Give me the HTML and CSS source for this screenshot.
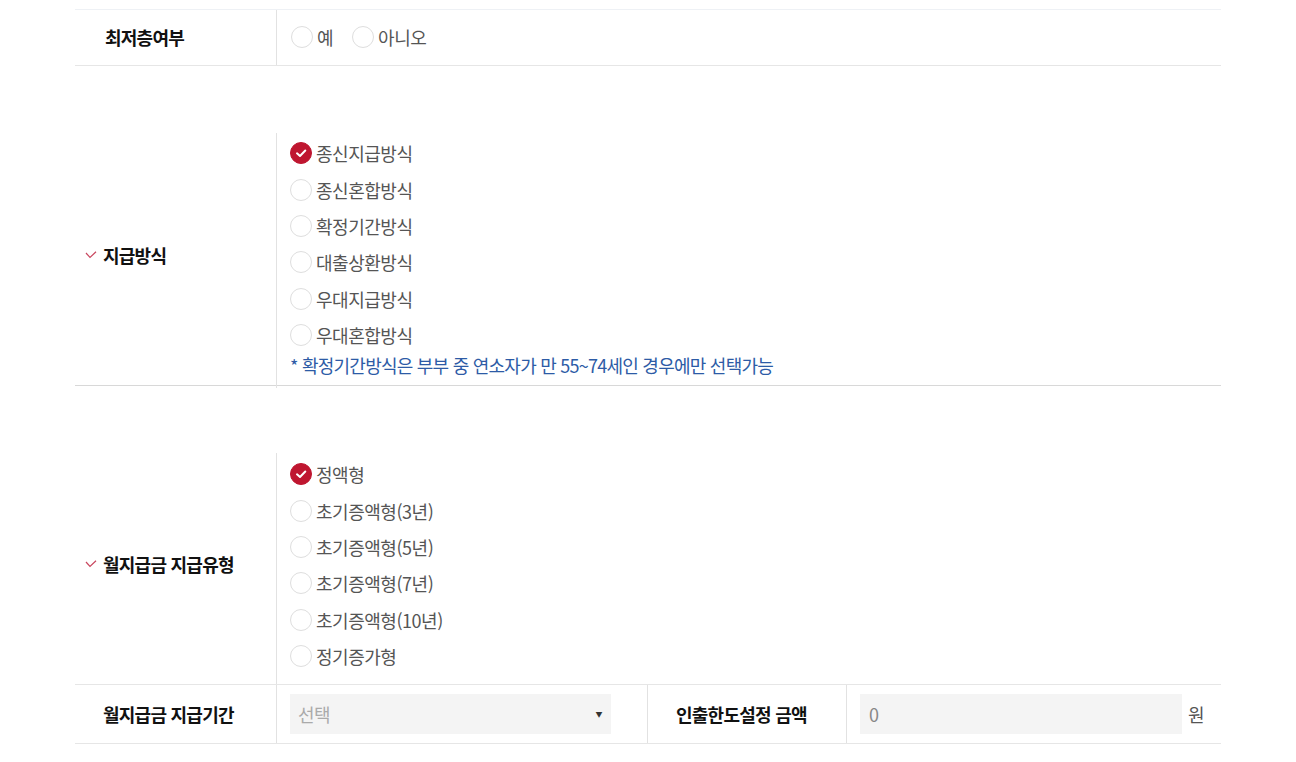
FILE: index.html
```html
<!DOCTYPE html>
<html lang="ko">
<head>
<meta charset="utf-8">
<title>지급방식</title>
<link rel="stylesheet" href="styles.css">
</head>
<body>
<div class="form">
  <div class="row row-first">
    <div class="label">최저층여부</div>
    <div class="cell cell-inline">
      <label class="radio"><span class="dot"></span><span class="txt">예</span></label>
      <label class="radio"><span class="dot"></span><span class="txt">아니오</span></label>
    </div>
  </div>

  <div class="row row-tall row-method">
    <div class="label label-req"><svg class="req" viewBox="0 0 12 8" width="12" height="8"><polyline points="1,2 5,6.5 11,0.8" fill="none" stroke="#c9465e" stroke-width="1.2"/></svg>지급방식</div>
    <div class="cell cell-list">
      <label class="radio"><span class="dot on"><svg viewBox="0 0 22 22" width="22" height="22"><polyline points="7,11.3 10,14 15.3,8.5" fill="none" stroke="#fff" stroke-width="2" stroke-linecap="round" stroke-linejoin="round"/></svg></span><span class="txt">종신지급방식</span></label>
      <label class="radio"><span class="dot"></span><span class="txt">종신혼합방식</span></label>
      <label class="radio"><span class="dot"></span><span class="txt">확정기간방식</span></label>
      <label class="radio"><span class="dot"></span><span class="txt">대출상환방식</span></label>
      <label class="radio"><span class="dot"></span><span class="txt">우대지급방식</span></label>
      <label class="radio"><span class="dot"></span><span class="txt">우대혼합방식</span></label>
      <p class="note">* 확정기간방식은 부부 중 연소자가 만 55~74세인 경우에만 선택가능</p>
    </div>
  </div>

  <div class="row row-tall row-type">
    <div class="label label-req"><svg class="req" viewBox="0 0 12 8" width="12" height="8"><polyline points="1,2 5,6.5 11,0.8" fill="none" stroke="#c9465e" stroke-width="1.2"/></svg>월지급금 지급유형</div>
    <div class="cell cell-list">
      <label class="radio"><span class="dot on"><svg viewBox="0 0 22 22" width="22" height="22"><polyline points="7,11.3 10,14 15.3,8.5" fill="none" stroke="#fff" stroke-width="2" stroke-linecap="round" stroke-linejoin="round"/></svg></span><span class="txt">정액형</span></label>
      <label class="radio"><span class="dot"></span><span class="txt">초기증액형(3년)</span></label>
      <label class="radio"><span class="dot"></span><span class="txt">초기증액형(5년)</span></label>
      <label class="radio"><span class="dot"></span><span class="txt">초기증액형(7년)</span></label>
      <label class="radio"><span class="dot"></span><span class="txt">초기증액형(10년)</span></label>
      <label class="radio"><span class="dot"></span><span class="txt">정기증가형</span></label>
    </div>
  </div>

  <div class="row row-last">
    <div class="label label-alt">월지급금 지급기간</div>
    <div class="cell cell-select">
      <div class="select"><span>선택</span><span class="arrow">▼</span></div>
    </div>
    <div class="label label-mid">인출한도설정 금액</div>
    <div class="cell cell-input">
      <div class="input">0</div>
      <span class="unit">원</span>
    </div>
  </div>
</div>
</body>
</html>
```

FILE: styles.css
```css
* { box-sizing: border-box; }
html, body { margin: 0; padding: 0; background: #fff; }
body {
  font-family: "Noto Sans CJK KR", "Noto Sans", sans-serif;
  font-size: 18px;
  color: #111;
}
.form {
  width: 1146px;
  margin: 9px auto 0;
  border-top: 1px solid #eef1f5;
}
.row {
  display: flex;
  border-bottom: 1px solid #e6e6e6;
}
.label {
  width: 201px;
  flex: none;
  display: flex;
  align-items: center;
  padding-left: 30px;
  padding-bottom: 2px;
  font-weight: 700;
  letter-spacing: -0.75px;
  color: #111;
}
.label-req { padding-left: 10px; padding-bottom: 9px; }
.req { margin-right: 6px; flex: none; }
.label-alt { padding-left: 28px; }
.cell {
  border-left: 1px solid #e2e2e2;
  flex: 1;
}
.row-first { height: 56px; }
.cell-inline {
  display: flex;
  align-items: center;
  gap: 19px;
  padding-left: 14px;
  padding-bottom: 1px;
}
.radio {
  display: flex;
  align-items: center;
  color: #555;
  letter-spacing: -0.47px;
}
.radio .dot {
  width: 22px;
  height: 22px;
  border-radius: 50%;
  border: 1px solid #dedede;
  background: #fff;
  margin-right: 4px;
  flex: none;
  display: flex;
}
.radio .dot.on {
  background: #bf1630;
  border-color: #bf1630;
}
.radio .dot.on svg { margin: -1px; }
.row-tall { padding-top: 67px; }
.cell-list {
  margin-bottom: -3px;
  padding: 2px 0 0 13px;
}
.cell-list .radio { height: 36.35px; }
.row-method .cell-list { padding-bottom: 11px; }
.row-type .cell-list { padding-top: 3px; padding-bottom: 10px; margin-bottom: 0; }
.row-method { border-bottom-color: #d8d8d8; }
.note {
  margin: 0;
  line-height: 24px;
  color: #2d5ba6;
  letter-spacing: -0.76px;
}
.row-last { height: 59px; }
.row-last .label { padding-bottom: 1px; }
.cell-select {
  flex: none;
  width: 371px;
  display: flex;
  align-items: center;
  padding-left: 13px;
}
.select {
  width: 321px;
  height: 40px;
  background: #f4f4f4;
  display: flex;
  align-items: center;
  justify-content: space-between;
  padding: 0 9px 0 8px;
  color: #aaa;
  letter-spacing: -0.5px;
}
.select .arrow {
  font-size: 7px;
  color: #333;
}
.label-mid {
  width: 199px;
  border-left: 1px solid #e2e2e2;
  padding-left: 28px;
}
.cell-input {
  display: flex;
  align-items: center;
  padding-left: 13px;
}
.input {
  width: 322px;
  height: 40px;
  background: #f4f4f4;
  display: flex;
  align-items: center;
  padding-left: 9px;
  color: #888;
}
.unit {
  margin-left: 6px;
  color: #555;
}
```
